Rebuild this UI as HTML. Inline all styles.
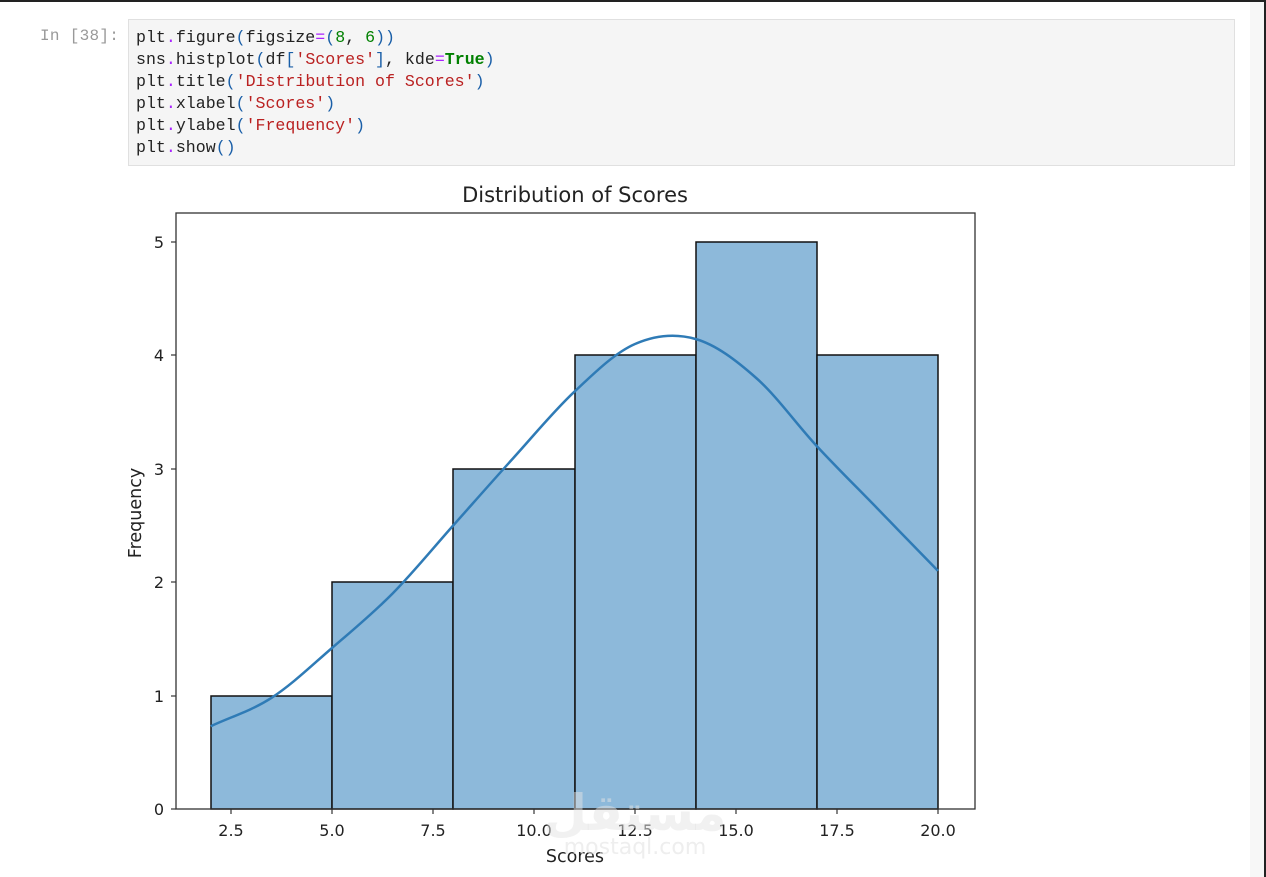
<!DOCTYPE html>
<html><head><meta charset="utf-8"><style>
html,body{margin:0;padding:0;width:1266px;height:877px;overflow:hidden;background:#fff;}
.frame{position:absolute;left:0;top:0;width:1264px;height:875px;border-top:2px solid #222;border-right:2px solid #222;box-sizing:content-box;}
.scroll{position:absolute;left:1250px;top:2px;width:14px;height:875px;background:#f7f7f7;}
.prompt{position:absolute;left:40px;top:27px;font:16px "Liberation Mono",monospace;color:#999;letter-spacing:0.3px}
.code{position:absolute;left:128px;top:19px;width:1105px;height:145px;background:#f5f5f5;border:1px solid #e0e0e0;}
pre{margin:0;position:absolute;left:7px;top:7px;font:16.6px/22px "Liberation Mono",monospace;color:#222;}
.p{color:#aa22ff}.b{color:#1a5fa8}.s{color:#ba2121}.n{color:#008000}.k{color:#008000;font-weight:bold}
svg{position:absolute;left:0;top:0}
</style></head><body>
<div class="frame"></div><div class="scroll"></div>
<div class="prompt">In [38]:</div>
<div class="code"><pre>plt<span class="p">.</span>figure<span class="b">(</span>figsize<span class="p">=</span><span class="b">(</span><span class="n">8</span>, <span class="n">6</span><span class="b">))</span>
sns<span class="p">.</span>histplot<span class="b">(</span>df<span class="b">[</span><span class="s">'Scores'</span><span class="b">]</span>, kde<span class="p">=</span><span class="k">True</span><span class="b">)</span>
plt<span class="p">.</span>title<span class="b">(</span><span class="s">'Distribution of Scores'</span><span class="b">)</span>
plt<span class="p">.</span>xlabel<span class="b">(</span><span class="s">'Scores'</span><span class="b">)</span>
plt<span class="p">.</span>ylabel<span class="b">(</span><span class="s">'Frequency'</span><span class="b">)</span>
plt<span class="p">.</span>show<span class="b">()</span></pre></div>
<svg width="1266" height="877" font-family="DejaVu Sans, sans-serif">
<g fill="#8db9da" stroke="#111" stroke-width="1.5">
<rect x="211" y="696" width="121" height="113"/>
<rect x="332" y="582" width="121" height="227"/>
<rect x="453" y="469" width="122" height="340"/>
<rect x="575" y="355" width="121" height="454"/>
<rect x="696" y="242" width="121" height="567"/>
<rect x="817" y="355" width="121" height="454"/>
</g>
<path fill="none" stroke="#2f7bb6" stroke-width="2.5" d="M210.8 726.2 C231 716.8 251.2 710.9 271.4 697.9 S311.8 665.4 332 648 S372.4 613.9 392.6 593.5 S433 548.2 453.2 525.5 S493.6 479.8 513.8 457.5 S554.2 410.6 574.4 391.7 S614.8 352.8 635 344 S675.4 333.3 695.6 339 S736 360.2 756.2 378 S796.6 424.3 816.8 446.1 S857.2 487.7 877.4 508.5 S917.8 550.2 938 570.9"/>
<rect x="176" y="213" width="799" height="596" fill="none" stroke="#333" stroke-width="1.3"/>
<g stroke="#333" stroke-width="1.2">
<line x1="171" y1="809" x2="176" y2="809"/><line x1="171" y1="696" x2="176" y2="696"/><line x1="171" y1="582" x2="176" y2="582"/><line x1="171" y1="469" x2="176" y2="469"/><line x1="171" y1="355" x2="176" y2="355"/><line x1="171" y1="242" x2="176" y2="242"/>
<line x1="231" y1="809" x2="231" y2="814"/><line x1="332" y1="809" x2="332" y2="814"/><line x1="433" y1="809" x2="433" y2="814"/><line x1="534" y1="809" x2="534" y2="814"/><line x1="635" y1="809" x2="635" y2="814"/><line x1="736" y1="809" x2="736" y2="814"/><line x1="837" y1="809" x2="837" y2="814"/><line x1="938" y1="809" x2="938" y2="814"/>
</g>
<g font-size="16" fill="#222" text-anchor="end">
<text x="164" y="815">0</text><text x="164" y="702">1</text><text x="164" y="588">2</text><text x="164" y="475">3</text><text x="164" y="361">4</text><text x="164" y="248">5</text>
</g>
<g font-size="16" fill="#222" text-anchor="middle">
<text x="231" y="836">2.5</text><text x="332" y="836">5.0</text><text x="433" y="836">7.5</text><text x="534" y="836">10.0</text><text x="635" y="836">12.5</text><text x="736" y="836">15.0</text><text x="837" y="836">17.5</text><text x="938" y="836">20.0</text>
</g>
<text x="575" y="202" font-size="21" fill="#222" text-anchor="middle">Distribution of Scores</text>
<text x="575" y="862" font-size="17.5" fill="#222" text-anchor="middle">Scores</text>
<text transform="translate(141,513) rotate(-90)" font-size="17.5" fill="#222" text-anchor="middle">Frequency</text>
<text x="635" y="830" font-size="50" font-weight="bold" fill="#e4e4e4" fill-opacity="0.5" text-anchor="middle" font-family="Noto Sans CJK SC, DejaVu Sans, sans-serif">مستقل</text>
<text x="635" y="854" font-size="22" fill="#e2e2e2" fill-opacity="0.6" text-anchor="middle">mostaql.com</text>
</svg>
</body></html>
